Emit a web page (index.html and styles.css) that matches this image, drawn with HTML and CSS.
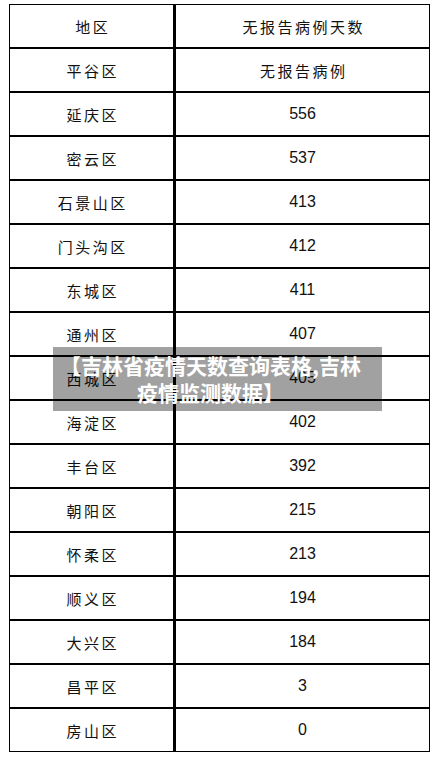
FILE: index.html
```html
<!DOCTYPE html>
<html lang="zh">
<head>
<meta charset="utf-8">
<title>吉林省疫情天数查询表格</title>
<link rel="stylesheet" href="styles.css">
</head>
<body>
<div class="page">
  <div class="grid">
    <div class="cell name">地区</div><div class="cell val">无报告病例天数</div>
    <div class="cell name">平谷区</div><div class="cell val">无报告病例</div>
    <div class="cell name">延庆区</div><div class="cell val num">556</div>
    <div class="cell name">密云区</div><div class="cell val num">537</div>
    <div class="cell name">石景山区</div><div class="cell val num">413</div>
    <div class="cell name">门头沟区</div><div class="cell val num">412</div>
    <div class="cell name">东城区</div><div class="cell val num">411</div>
    <div class="cell name">通州区</div><div class="cell val num">407</div>
    <div class="cell name">西城区</div><div class="cell val num">405</div>
    <div class="cell name">海淀区</div><div class="cell val num">402</div>
    <div class="cell name">丰台区</div><div class="cell val num">392</div>
    <div class="cell name">朝阳区</div><div class="cell val num">215</div>
    <div class="cell name">怀柔区</div><div class="cell val num">213</div>
    <div class="cell name">顺义区</div><div class="cell val num">194</div>
    <div class="cell name">大兴区</div><div class="cell val num">184</div>
    <div class="cell name">昌平区</div><div class="cell val num">3</div>
    <div class="cell name last">房山区</div><div class="cell val num last">0</div>
  </div>
  <div class="caption">【吉林省疫情天数查询表格,吉林疫情监测数据】</div>
</div>
</body>
</html>
```
FILE: styles.css
```css
html, body {
  margin: 0;
  padding: 0;
  background: #fff;
}
.page {
  position: relative;
  width: 437px;
  height: 760px;
  padding-top: 4px;
  padding-left: 9px;
  box-sizing: border-box;
}
.grid {
  display: grid;
  grid-template-columns: 166px 253px;
  width: 419px;
  border: 1px solid #000;
  font-family: "Noto Sans CJK SC", "Liberation Sans", sans-serif;
  color: #111;
}
.cell {
  height: 42px;
  border-bottom: 2px solid #000;
  display: flex;
  align-items: center;
  justify-content: center;
  font-size: 15px;
  letter-spacing: 2.5px;
  padding-left: 2.5px;
  box-sizing: content-box;
}
.cell.name {
  border-right: 3px solid #000;
}
.cell.last {
  border-bottom: none;
}
.cell.num {
  font-family: "Liberation Sans", Arial, sans-serif;
  font-size: 16px;
  letter-spacing: 0;
  padding-left: 0;
}
.caption {
  position: absolute;
  left: 53px;
  top: 347px;
  width: 329px;
  height: 64px;
  box-sizing: border-box;
  padding: 5px 19px 0 5px;
  background: rgba(0, 0, 0, 0.37);
  color: #fff;
  font-family: "Noto Sans CJK SC", sans-serif;
  font-weight: 700;
  font-size: 21px;
  line-height: 27px;
  text-align: center;
}
```
